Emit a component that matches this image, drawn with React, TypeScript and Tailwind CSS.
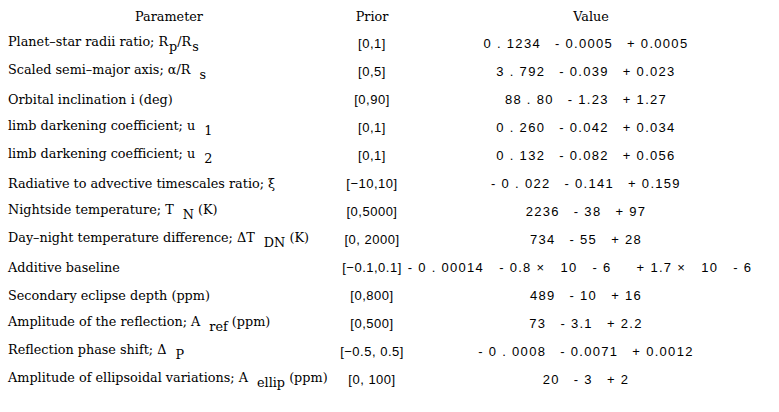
import React from "react";

type Row = {
  label: React.ReactNode;
  prior: string;
  value: React.ReactNode[];
  valueClass?: string;
};

const Sub = ({ children, gap = true }: { children: React.ReactNode; gap?: boolean }) => (
  <span className={`align-[-5px] ${gap ? "ml-[5px]" : "ml-[1px]"}`}>{children}</span>
);

const rows: Row[] = [
  {
    label: (
      <>
        Planet–star radii ratio; R<Sub gap={false}>p</Sub>/R<Sub gap={false}>s</Sub>
      </>
    ),
    prior: "[0,1]",
    value: ["0 . 1234", "- 0.0005", "+ 0.0005"],
  },
  {
    label: (
      <>
        Scaled semi–major axis; α/R <Sub>s</Sub>
      </>
    ),
    prior: "[0,5]",
    value: ["3 . 792", "- 0.039", "+ 0.023"],
  },
  { label: <>Orbital inclination i (deg)</>, prior: "[0,90]", value: ["88 . 80", "- 1.23", "+ 1.27"] },
  {
    label: (
      <>
        limb darkening coefficient; u <Sub>1</Sub>
      </>
    ),
    prior: "[0,1]",
    value: ["0 . 260", "- 0.042", "+ 0.034"],
  },
  {
    label: (
      <>
        limb darkening coefficient; u <Sub>2</Sub>
      </>
    ),
    prior: "[0,1]",
    value: ["0 . 132", "- 0.082", "+ 0.056"],
  },
  {
    label: <>Radiative to advective timescales ratio; ξ</>,
    prior: "[−10,10]",
    value: ["- 0 . 022", "- 0.141", "+ 0.159"],
  },
  {
    label: (
      <>
        Nightside temperature; T <Sub>N</Sub> (K)
      </>
    ),
    prior: "[0,5000]",
    value: ["2236", "- 38", "+ 97"],
  },
  {
    label: (
      <>
        Day–night temperature difference; ΔT <Sub>DN</Sub> (K)
      </>
    ),
    prior: "[0, 2000]",
    value: ["734", "- 55", "+ 28"],
  },
  {
    label: <>Additive baseline</>,
    prior: "[−0.1,0.1]",
    value: [
      "- 0 . 00014",
      "- 0.8 ×",
      "10",
      "- 6",
      <span key="p" className="ml-[10px]">+ 1.7 ×</span>,
      "10",
      "- 6",
    ],
    valueClass: "mr-[12px] gap-[15px]",
  },
  { label: <>Secondary eclipse depth (ppm)</>, prior: "[0,800]", value: ["489", "- 10", "+ 16"] },
  {
    label: (
      <>
        Amplitude of the reflection; A <Sub>ref</Sub> (ppm)
      </>
    ),
    prior: "[0,500]",
    value: ["73", "- 3.1", "+ 2.2"],
  },
  {
    label: (
      <>
        Reflection phase shift; Δ <Sub>P</Sub>
      </>
    ),
    prior: "[−0.5, 0.5]",
    value: ["- 0 . 0008", "- 0.0071", "+ 0.0012"],
  },
  {
    label: (
      <>
        Amplitude of ellipsoidal variations; A <Sub>ellip</Sub> (ppm)
      </>
    ),
    prior: "[0, 100]",
    value: ["20", "- 3", "+ 2"],
  },
];

const serif = "font-['DejaVu_Serif',serif] text-[12.8px]";

export default function App() {
  return (
    <div className="w-[779px] h-[412px] bg-white text-black overflow-hidden pt-[3px]">
      <div className="grid grid-cols-[330px_84px_minmax(0,1fr)] pr-[17px]">
        <div className={`h-[27px] flex items-center justify-center pl-[8px] ${serif}`}>Parameter</div>
        <div className={`h-[27px] flex items-center justify-center ${serif}`}>Prior</div>
        <div className={`h-[27px] flex items-center justify-center pl-[6px] ${serif}`}>Value</div>
        {rows.map((r, i) => (
          <React.Fragment key={i}>
            <div className={`h-[28px] flex items-center pl-[8px] whitespace-pre ${serif}`}>
              <span>{r.label}</span>
            </div>
            <div className="h-[28px] flex items-center justify-center whitespace-pre font-['Liberation_Sans',sans-serif] text-[13px] tracking-[0.5px]">
              {r.prior}
            </div>
            <div className="h-[28px] flex items-center justify-center pr-[4px] font-['Liberation_Sans',sans-serif] text-[13px] tracking-[1.3px]">
              <div className={`flex shrink-0 items-center whitespace-pre ${r.valueClass ?? "gap-[14px]"}`}>
                {r.value.map((v, j) => (
                  <span key={j}>{v}</span>
                ))}
              </div>
            </div>
          </React.Fragment>
        ))}
      </div>
    </div>
  );
}
